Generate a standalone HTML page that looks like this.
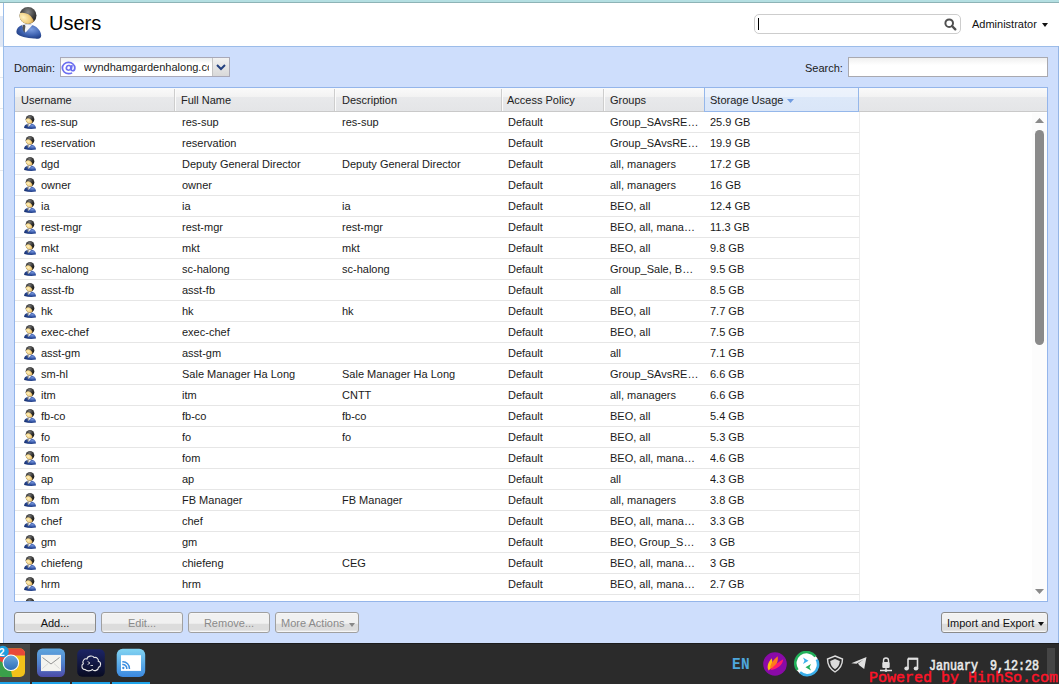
<!DOCTYPE html>
<html><head><meta charset="utf-8">
<style>
*{box-sizing:border-box;margin:0;padding:0}
html,body{width:1059px;height:684px;overflow:hidden;background:#fff;font-family:"Liberation Sans",sans-serif;font-size:11px;color:#1a1a1a}
.abs{position:absolute}
#topbar{left:0;top:0;width:1059px;height:2px;background:#b4dfe2}
#topline{left:0;top:2px;width:1059px;height:1px;background:#8db3b6}
#lstrip{left:0;top:3px;width:3px;height:640px;background:#fff}
#lband{left:0;top:16px;width:3px;height:31px;background:#dfe7f5}
#lline{left:3px;top:3px;width:1px;height:640px;background:#9bbde9}
#header{left:4px;top:3px;width:1055px;height:43px;background:#fff}
#hline{left:4px;top:46px;width:1055px;height:1px;background:#9cbce9}
#content{left:4px;top:47px;width:1054px;height:596px;background:#cedefc}
#rline{left:1058px;top:46px;width:1px;height:597px;background:#94b5e5}
#title{left:49px;top:11px;font-size:20px;color:#000;line-height:24px}
#bigicon{left:16px;top:7px}
#qsearch{left:754px;top:14px;width:207px;height:20px;border:1px solid #cdcdcd;border-radius:5px;background:#fff}
#caret{left:758px;top:18px;width:1px;height:12px;background:#000}
#admin{left:972px;top:17px;line-height:14px;color:#111}
#domlabel{left:14px;top:62px;line-height:13px}
#domsel{left:60px;top:57px;width:170px;height:20px;border:1px solid #a9a9b8;background:linear-gradient(#ebeeef,#fff 30%)}
#domtext{left:84px;top:60px;width:125px;overflow:hidden;white-space:nowrap;line-height:14px}
#at{left:61px;top:58px;font-size:15px;font-weight:bold;color:#6d73e6;line-height:17px}
#ddbtn{left:212px;top:58px;width:17px;height:18px;background:linear-gradient(#f2f2f2,#d8d8d8);border-left:1px solid #c4c4c4}
#srchlabel{left:805px;top:62px;line-height:13px}
#srch{left:848px;top:57px;width:200px;height:20px;border:1px solid #a9a9b0;background:linear-gradient(#f0f0f0,#fff 40%)}
#grid{left:14px;top:87px;width:1034px;height:515px;border:1px solid #94b5ea;background:#fff;overflow:hidden}
#ghead{position:absolute;left:0;top:0;width:1032px;height:24px;background:linear-gradient(#fafafa,#f2f2f2 40%,#e8e9eb 41%,#e4e5e7);border-bottom:1px solid #c9c9c9}
.h{position:absolute;top:1px;height:23px;line-height:23px;white-space:nowrap;color:#222}
.hs{position:absolute;top:1px;width:2px;height:22px;background:linear-gradient(90deg,#cdcdcd 50%,#fbfbfb 50%)}
#sorted{position:absolute;left:689px;top:0;width:155px;height:24px;background:linear-gradient(#edf3fc,#eaf1fc 40%,#dce8f9 41%,#dae6f8);border:1px solid #95b7ea;border-top:none}
#rows{position:absolute;left:0;top:24px;width:845px}
.r{position:relative;height:21px;border-bottom:1px solid #e6e6e6;border-right:1px solid #ededed;white-space:nowrap}
.c{position:absolute;top:0;height:20px;line-height:20px;overflow:hidden;text-overflow:ellipsis;white-space:nowrap;color:#1a1a1a}
.c1{left:26px;width:130px}
.ui{position:absolute;left:-17px;top:2px}
.c1{overflow:visible}
.c2{left:167px;width:150px}
.c3{left:327px;width:160px}
.c4{left:493px;width:95px}
.c5{left:595px;width:90px}
.c6{left:695px;width:140px}
#vsb{position:absolute;left:1017px;top:25px;width:15px;height:487px;background:#fcfcfc}
.btn{position:absolute;top:612px;height:21px;border:1px solid #8a8a8a;border-radius:3px;background:linear-gradient(#fdfdfd,#f1f1f1 1px,#f1f1f1 55%,#dcdcdc 56%,#dcdcdc 90%,#fff);text-align:center;line-height:20px;color:#111}
.dis{color:#8a8a8a;border-color:#a0a0a0}
#taskbar{left:0;top:643px;width:1059px;height:41px;background:#2b2b2b}
</style></head><body>
<svg width="0" height="0" style="position:absolute">
<defs>
<radialGradient id="gbody" cx="0.6" cy="0.35" r="0.7"><stop offset="0" stop-color="#7d9ee0"/><stop offset="0.6" stop-color="#3e62b0"/><stop offset="1" stop-color="#1e3a7e"/></radialGradient>
<radialGradient id="gface" cx="0.35" cy="0.4" r="0.6"><stop offset="0" stop-color="#fff2c0"/><stop offset="0.7" stop-color="#f0cc7a"/><stop offset="1" stop-color="#c99a4a"/></radialGradient>
<radialGradient id="gbody2" cx="0.7" cy="0.4" r="0.75"><stop offset="0" stop-color="#7190d8"/><stop offset="0.55" stop-color="#2f50a0"/><stop offset="1" stop-color="#142c6a"/></radialGradient><radialGradient id="ghair2" cx="0.45" cy="0.25" r="0.75"><stop offset="0" stop-color="#777"/><stop offset="0.5" stop-color="#333"/><stop offset="1" stop-color="#111"/></radialGradient>
<radialGradient id="ghair" cx="0.5" cy="0.3" r="0.7"><stop offset="0" stop-color="#8a8a8a"/><stop offset="0.6" stop-color="#3d3d3d"/><stop offset="1" stop-color="#1f1f1f"/></radialGradient>
<clipPath id="hclip"><circle cx="12" cy="8.5" r="8.5"/></clipPath>
<clipPath id="hclip2"><circle cx="6" cy="5.2" r="4.3"/></clipPath>
<symbol id="ubig" viewBox="0 0 26 32">
<path d="M0.8,26.5 C-0.5,23.5 1.5,19.5 6,18 C9.5,17 14,17 17.5,18.5 C21.5,20 25,24 25.2,28.5 C25.3,31.5 22,32 18,31.6 C11,31 3,29.5 0.8,26.5 Z" fill="url(#gbody)"/>
<path d="M5.8,17.9 C9,17.2 13,17.1 16.5,18 L9.6,25.5 Z" fill="#f6f6f6"/>
<path d="M6.6,18 L9,18 L9.4,19.5 L8.4,26.3 L6.8,22.5 Z" fill="#555"/>
<circle cx="12" cy="8.5" r="8.5" fill="url(#ghair)"/>
<g clip-path="url(#hclip)"><ellipse cx="9.2" cy="12.8" rx="9.2" ry="6.3" transform="rotate(30 9.2 12.8)" fill="url(#gface)"/></g>
</symbol>
<symbol id="usm" viewBox="0 0 12 15">
<path d="M0.2,14 C-0.2,11.5 2.2,9.4 6,9.4 C9.6,9.4 12.2,11.5 11.9,14.6 C8,15.1 4,15 0.2,14 Z" fill="url(#gbody2)"/>
<path d="M2.6,9.8 C4,9.3 6,9.2 7.6,9.5 L4.4,13 Z" fill="#f2f2f2"/>
<path d="M3.4,9.7 L4.5,9.7 L4.3,13.3 L3.3,11.8 Z" fill="#555"/>
<circle cx="6" cy="5.2" r="4.3" fill="url(#ghair2)"/>
<g clip-path="url(#hclip2)"><ellipse cx="4.9" cy="7.6" rx="3.7" ry="2.9" transform="rotate(35 4.9 7.6)" fill="url(#gface)"/></g>
</symbol>
</defs>
</svg>
<div class="abs" id="topbar"></div><div class="abs" id="topline"></div>
<div class="abs" id="lstrip"></div><div class="abs" id="lband"></div><div class="abs" id="lline"></div><div class="abs" style="left:0;top:77px;width:3px;height:1px;background:#e6e9ee"></div><div class="abs" style="left:0;top:108px;width:3px;height:1px;background:#e6e9ee"></div><div class="abs" style="left:0;top:139px;width:3px;height:1px;background:#dfe6f2"></div><div class="abs" style="left:0;top:170px;width:3px;height:1px;background:#e6e9ee"></div>
<div class="abs" id="header"></div><div class="abs" id="hline"></div>
<div class="abs" id="content"></div><div class="abs" id="rline"></div>
<svg class="abs" id="bigicon" width="26" height="32"><use href="#ubig"/></svg>
<div class="abs" id="title">Users</div>
<div class="abs" id="qsearch"></div><div class="abs" id="caret"></div>
<svg class="abs" style="left:944px;top:18px" width="13" height="13" viewBox="0 0 13 13"><circle cx="5.2" cy="5.2" r="3.8" fill="none" stroke="#505050" stroke-width="2"/><path d="M8,8 L11.3,11.3" stroke="#505050" stroke-width="2.4" stroke-linecap="round"/></svg>
<div class="abs" id="admin">Administrator</div>
<svg class="abs" style="left:1042px;top:23px" width="6" height="4"><path d="M0,0 H6 L3,4 Z" fill="#111"/></svg>
<div class="abs" id="domlabel">Domain:</div>
<div class="abs" id="domsel"></div>
<svg class="abs" style="left:61px;top:60px" width="16" height="16" viewBox="0 0 16 16" fill="none" stroke="#6c6ff0"><g transform="translate(7.6,8) scale(1.04,0.94) translate(-7.6,-8)"><path d="M11,13.2 C10,13.7 8.9,14 7.6,14 A6,6 0 1 1 13.6,7.9 C13.6,9.9 12.5,10.9 11.3,10.9 C10.3,10.9 9.9,10.3 10.1,9.3 L10.9,4.9" stroke-width="1.7"/><ellipse cx="7.6" cy="7.8" rx="2.1" ry="2.5" stroke-width="1.6" transform="rotate(15 7.6 7.8)"/></g></svg>
<div class="abs" id="domtext">wyndhamgardenhalong.com</div>
<div class="abs" id="ddbtn"></div>
<svg class="abs" style="left:216px;top:64px" width="10" height="7"><path d="M1,1 L5,5 L9,1" fill="none" stroke="#23407f" stroke-width="2"/></svg>
<div class="abs" id="srchlabel">Search:</div>
<div class="abs" id="srch"></div>
<div class="abs" id="grid">
 <div id="ghead">
  <div class="h" style="left:6px">Username</div>
  <div class="hs" style="left:159px"></div>
  <div class="h" style="left:166px">Full Name</div>
  <div class="hs" style="left:319px"></div>
  <div class="h" style="left:327px">Description</div>
  <div class="hs" style="left:486px"></div>
  <div class="h" style="left:492px">Access Policy</div>
  <div class="hs" style="left:588px"></div>
  <div class="h" style="left:595px">Groups</div>
  <div id="sorted"></div>
  <div class="h" style="left:695px">Storage Usage</div>
  <svg style="position:absolute;left:772px;top:11px" width="7" height="4"><path d="M0,0 H7 L3.5,4 Z" fill="#6f9be0"/></svg>
 </div>
 <div id="rows">
<div class="r"><div class="c c1"><svg class="ui" width="12" height="15"><use href="#usm"/></svg>res-sup</div><div class="c c2">res-sup</div><div class="c c3">res-sup</div><div class="c c4">Default</div><div class="c c5">Group_SAvsREPORT, all</div><div class="c c6">25.9 GB</div></div>
<div class="r"><div class="c c1"><svg class="ui" width="12" height="15"><use href="#usm"/></svg>reservation</div><div class="c c2">reservation</div><div class="c c3"></div><div class="c c4">Default</div><div class="c c5">Group_SAvsREPORT, all</div><div class="c c6">19.9 GB</div></div>
<div class="r"><div class="c c1"><svg class="ui" width="12" height="15"><use href="#usm"/></svg>dgd</div><div class="c c2">Deputy General Director</div><div class="c c3">Deputy General Director</div><div class="c c4">Default</div><div class="c c5">all, managers</div><div class="c c6">17.2 GB</div></div>
<div class="r"><div class="c c1"><svg class="ui" width="12" height="15"><use href="#usm"/></svg>owner</div><div class="c c2">owner</div><div class="c c3"></div><div class="c c4">Default</div><div class="c c5">all, managers</div><div class="c c6">16 GB</div></div>
<div class="r"><div class="c c1"><svg class="ui" width="12" height="15"><use href="#usm"/></svg>ia</div><div class="c c2">ia</div><div class="c c3">ia</div><div class="c c4">Default</div><div class="c c5">BEO, all</div><div class="c c6">12.4 GB</div></div>
<div class="r"><div class="c c1"><svg class="ui" width="12" height="15"><use href="#usm"/></svg>rest-mgr</div><div class="c c2">rest-mgr</div><div class="c c3">rest-mgr</div><div class="c c4">Default</div><div class="c c5">BEO, all, managers</div><div class="c c6">11.3 GB</div></div>
<div class="r"><div class="c c1"><svg class="ui" width="12" height="15"><use href="#usm"/></svg>mkt</div><div class="c c2">mkt</div><div class="c c3">mkt</div><div class="c c4">Default</div><div class="c c5">BEO, all</div><div class="c c6">9.8 GB</div></div>
<div class="r"><div class="c c1"><svg class="ui" width="12" height="15"><use href="#usm"/></svg>sc-halong</div><div class="c c2">sc-halong</div><div class="c c3">sc-halong</div><div class="c c4">Default</div><div class="c c5">Group_Sale, BEO, all</div><div class="c c6">9.5 GB</div></div>
<div class="r"><div class="c c1"><svg class="ui" width="12" height="15"><use href="#usm"/></svg>asst-fb</div><div class="c c2">asst-fb</div><div class="c c3"></div><div class="c c4">Default</div><div class="c c5">all</div><div class="c c6">8.5 GB</div></div>
<div class="r"><div class="c c1"><svg class="ui" width="12" height="15"><use href="#usm"/></svg>hk</div><div class="c c2">hk</div><div class="c c3">hk</div><div class="c c4">Default</div><div class="c c5">BEO, all</div><div class="c c6">7.7 GB</div></div>
<div class="r"><div class="c c1"><svg class="ui" width="12" height="15"><use href="#usm"/></svg>exec-chef</div><div class="c c2">exec-chef</div><div class="c c3"></div><div class="c c4">Default</div><div class="c c5">BEO, all</div><div class="c c6">7.5 GB</div></div>
<div class="r"><div class="c c1"><svg class="ui" width="12" height="15"><use href="#usm"/></svg>asst-gm</div><div class="c c2">asst-gm</div><div class="c c3"></div><div class="c c4">Default</div><div class="c c5">all</div><div class="c c6">7.1 GB</div></div>
<div class="r"><div class="c c1"><svg class="ui" width="12" height="15"><use href="#usm"/></svg>sm-hl</div><div class="c c2">Sale Manager Ha Long</div><div class="c c3">Sale Manager Ha Long</div><div class="c c4">Default</div><div class="c c5">Group_SAvsREPORT, all</div><div class="c c6">6.6 GB</div></div>
<div class="r"><div class="c c1"><svg class="ui" width="12" height="15"><use href="#usm"/></svg>itm</div><div class="c c2">itm</div><div class="c c3">CNTT</div><div class="c c4">Default</div><div class="c c5">all, managers</div><div class="c c6">6.6 GB</div></div>
<div class="r"><div class="c c1"><svg class="ui" width="12" height="15"><use href="#usm"/></svg>fb-co</div><div class="c c2">fb-co</div><div class="c c3">fb-co</div><div class="c c4">Default</div><div class="c c5">BEO, all</div><div class="c c6">5.4 GB</div></div>
<div class="r"><div class="c c1"><svg class="ui" width="12" height="15"><use href="#usm"/></svg>fo</div><div class="c c2">fo</div><div class="c c3">fo</div><div class="c c4">Default</div><div class="c c5">BEO, all</div><div class="c c6">5.3 GB</div></div>
<div class="r"><div class="c c1"><svg class="ui" width="12" height="15"><use href="#usm"/></svg>fom</div><div class="c c2">fom</div><div class="c c3"></div><div class="c c4">Default</div><div class="c c5">BEO, all, managers</div><div class="c c6">4.6 GB</div></div>
<div class="r"><div class="c c1"><svg class="ui" width="12" height="15"><use href="#usm"/></svg>ap</div><div class="c c2">ap</div><div class="c c3"></div><div class="c c4">Default</div><div class="c c5">all</div><div class="c c6">4.3 GB</div></div>
<div class="r"><div class="c c1"><svg class="ui" width="12" height="15"><use href="#usm"/></svg>fbm</div><div class="c c2">FB Manager</div><div class="c c3">FB Manager</div><div class="c c4">Default</div><div class="c c5">all, managers</div><div class="c c6">3.8 GB</div></div>
<div class="r"><div class="c c1"><svg class="ui" width="12" height="15"><use href="#usm"/></svg>chef</div><div class="c c2">chef</div><div class="c c3"></div><div class="c c4">Default</div><div class="c c5">BEO, all, managers</div><div class="c c6">3.3 GB</div></div>
<div class="r"><div class="c c1"><svg class="ui" width="12" height="15"><use href="#usm"/></svg>gm</div><div class="c c2">gm</div><div class="c c3"></div><div class="c c4">Default</div><div class="c c5">BEO, Group_Sale, all</div><div class="c c6">3 GB</div></div>
<div class="r"><div class="c c1"><svg class="ui" width="12" height="15"><use href="#usm"/></svg>chiefeng</div><div class="c c2">chiefeng</div><div class="c c3">CEG</div><div class="c c4">Default</div><div class="c c5">BEO, all, managers</div><div class="c c6">3 GB</div></div>
<div class="r"><div class="c c1"><svg class="ui" width="12" height="15"><use href="#usm"/></svg>hrm</div><div class="c c2">hrm</div><div class="c c3"></div><div class="c c4">Default</div><div class="c c5">BEO, all, managers</div><div class="c c6">2.7 GB</div></div>
<div class="r"><div class="c c1"><svg class="ui" width="12" height="15"><use href="#usm"/></svg>xyz</div><div class="c c2">xyz</div><div class="c c3"></div><div class="c c4">Default</div><div class="c c5">all</div><div class="c c6">2.5 GB</div></div>
 </div>
 <div id="vsb"></div>
 <svg style="position:absolute;left:1020px;top:30px" width="9" height="5"><path d="M0,5 L4.5,0 L9,5 Z" fill="#8a8a8a"/></svg>
 <div style="position:absolute;left:1020px;top:42px;width:9px;height:215px;border-radius:4.5px;background:#8a8a8a"></div>
 <svg style="position:absolute;left:1020px;top:501px" width="9" height="5"><path d="M0,0 L9,0 L4.5,5 Z" fill="#8a8a8a"/></svg>
</div>
<div class="btn" style="left:14px;width:82px">Add...</div>
<div class="btn dis" style="left:101px;width:82px">Edit...</div>
<div class="btn dis" style="left:188px;width:82px">Remove...</div>
<div class="btn dis" style="left:275px;width:84px;text-align:left;padding-left:5px">More Actions</div>
<svg class="abs" style="left:349px;top:623px" width="6" height="4"><path d="M0,0 H6 L3,4 Z" fill="#888"/></svg>
<div class="btn" style="left:941px;width:107px;text-align:left;padding-left:5px">Import and Export</div>
<svg class="abs" style="left:1038px;top:622px" width="6" height="4"><path d="M0,0 H6 L3,4 Z" fill="#111"/></svg>
<div class="abs" id="taskbar"></div>
<div class="abs" style="left:0;top:643px;width:1059px;height:1px;background:#1c1c1c"></div>
<div class="abs" style="left:0;top:644px;width:30px;height:38px;background:#464646"></div>
<div class="abs" style="left:0;top:682px;width:30px;height:2px;background:#1ea3e8"></div>
<div class="abs" style="left:32px;top:682px;width:38px;height:2px;background:#1ea3e8"></div>
<div class="abs" style="left:72px;top:682px;width:38px;height:2px;background:#1ea3e8"></div>
<div class="abs" style="left:112px;top:682px;width:38px;height:2px;background:#1ea3e8"></div>
<svg class="abs" style="left:0;top:644px" width="30" height="38" viewBox="0 644 30 38">
 <defs><clipPath id="chc"><rect x="-3" y="648.6" width="28" height="28.4" rx="5"/></clipPath></defs>
 <g clip-path="url(#chc)">
  <rect x="-4" y="647" width="30" height="32" fill="#f2c21a"/>
  <path d="M-4,647 H26 V655.5 H11 L2,663 L-4,660 Z" fill="#e8483a"/>
  <path d="M-4,660 L2,662 L10.9,670 L12.8,679 H-4 Z" fill="#3aa04a"/>
 </g>
 <circle cx="10.9" cy="662.8" r="8.3" fill="#fff"/>
 <defs><linearGradient id="gchb" x1="0" y1="0" x2="0" y2="1"><stop offset="0" stop-color="#6aa6dc"/><stop offset="1" stop-color="#2f6fb8"/></linearGradient></defs><circle cx="10.9" cy="662.8" r="7.2" fill="url(#gchb)"/>
 <circle cx="3" cy="651.5" r="5.8" fill="#1d9fe0"/>
 <text x="-1" y="656" font-family="Liberation Sans" font-size="10" font-weight="bold" fill="#fff">2</text>
</svg>
<svg class="abs" style="left:37px;top:648px" width="29" height="30" viewBox="0 0 29 30">
 <defs><linearGradient id="gmail" x1="0" y1="0" x2="0" y2="1"><stop offset="0" stop-color="#5fa6de"/><stop offset="0.55" stop-color="#4f7fcc"/><stop offset="1" stop-color="#4c4aa6"/></linearGradient></defs>
 <rect x="0" y="0.6" width="28" height="28.4" rx="5.5" fill="url(#gmail)"/>
 <rect x="4" y="6.9" width="20" height="16.2" fill="#f4f3ef"/>
 <path d="M5.5,9.5 L14,16 L22.5,9.5" fill="none" stroke="#888" stroke-width="0.9"/>
 <path d="M5.5,20.5 L11,15.5 M22.5,20.5 L17,15.5" fill="none" stroke="#ccc" stroke-width="0.7"/>
</svg>
<svg class="abs" style="left:77px;top:649px" width="28" height="28" viewBox="0 0 28 28">
 <defs><linearGradient id="gterm" x1="0" y1="0" x2="0" y2="1"><stop offset="0" stop-color="#1c2566"/><stop offset="1" stop-color="#080b22"/></linearGradient></defs>
 <rect x="0.2" y="0.2" width="27.6" height="27.6" rx="5" fill="url(#gterm)"/>
 <path d="M8,20.5 C4.5,20.5 4,16 6.3,14.8 C4.8,12 7.5,9 10,10 C10.5,6.8 15.5,6 17.2,8.6 C19.5,7.8 22,10 21.3,12.3 C24.5,13 24.2,17.5 21.5,18.3 C21.5,21.5 17,22.5 15.5,20.5 C13.5,22.3 10,22.3 8,20.5 Z" fill="none" stroke="#e8e8e8" stroke-width="1.1"/>
 <path d="M10.6,12.5 L13,14 L10.6,15.5" fill="none" stroke="#ddd" stroke-width="0.9"/>
 <path d="M13.5,16.5 H16" stroke="#ddd" stroke-width="0.9"/>
</svg>
<svg class="abs" style="left:116px;top:648px" width="30" height="30" viewBox="0 0 30 30">
 <defs><linearGradient id="grss" x1="0" y1="0" x2="0" y2="1"><stop offset="0" stop-color="#82d4f2"/><stop offset="1" stop-color="#3a88e0"/></linearGradient></defs>
 <rect x="0.7" y="0.8" width="28.5" height="28.2" rx="6" fill="url(#grss)"/>
 <rect x="5" y="7.2" width="20" height="15.7" fill="#fff"/>
 <g transform="translate(6.5,21) scale(0.82) translate(-6.5,-21)"><circle cx="7.5" cy="19.8" r="1.4" fill="#3e8fe0"/>
 <path d="M6.2,15.5 A5,5 0 0 1 11.8,21 M6.2,12.3 A8,8 0 0 1 15,21" fill="none" stroke="#3e8fe0" stroke-width="1.8"/></g>
</svg>
<div class="abs" style="left:732px;top:656px;transform:scaleY(1.15);transform-origin:0 0;font-family:'Liberation Mono',monospace;font-weight:bold;font-size:14.5px;line-height:15px;color:#4ea6dc;letter-spacing:0.3px">EN</div>
<svg class="abs" style="left:762px;top:651px" width="26" height="26" viewBox="0 0 26 26">
 <circle cx="13" cy="13" r="11.8" fill="#8a0aa8"/>
 <path d="M6.6,19.5 C4.2,15.5 6.5,11 9.6,7.2 C10.8,10.5 10.8,14.5 8.6,17.5 Z" fill="#ffc20e"/>
 <path d="M8.2,18 C8,12.8 11.5,9 15.6,5.3 C16.4,9.5 15.2,13.5 11.2,16.8 Z" fill="#ff7a1a"/>
 <path d="M8.3,19 C11.5,14.8 16.5,11 21.2,8.3 C20.8,13 17.5,16.6 12.2,18.2 C11,18.6 9.6,18.9 8.3,19 Z" fill="#ff1a6e"/>
</svg>
<svg class="abs" style="left:794px;top:651px" width="26" height="26" viewBox="0 0 26 26">
 <circle cx="13" cy="13" r="11.8" fill="#fff"/>
 <path d="M3.5,19 A10.7,10.7 0 0 1 21.5,5.5" fill="none" stroke="#22b05a" stroke-width="2.6"/>
 <path d="M22.8,8.5 A10.7,10.7 0 0 1 6,21.3" fill="none" stroke="#3aaeea" stroke-width="2.6"/>
 <path d="M9,6.5 L14.5,9.8 L9,13 L10.5,9.8 Z" fill="#3aaeea"/>
 <path d="M17,13 L11.5,16.3 L17,19.5 L15.5,16.3 Z" fill="#22b05a"/>
</svg>
<svg class="abs" style="left:826px;top:655px" width="18" height="18" viewBox="0 0 18 18">
 <path d="M9,1 L16.5,4 C16.5,10 14,14 9,17 C4,14 1.5,10 1.5,4 Z" fill="none" stroke="#dcdcdc" stroke-width="1.4"/>
 <path d="M9,4 L13.8,6 C13.5,10 12,12.5 9,14.3 C6,12.5 4.5,10 4.2,6 Z" fill="#dcdcdc"/>
</svg>
<svg class="abs" style="left:851px;top:656px" width="16" height="14" viewBox="0 0 16 14">
 <path d="M0.3,7.3 L15.5,1 L13.2,13 L8.5,9.6 L7,7.6 L12.5,3.5 L5.5,7.8 Z" fill="#e0e0e0"/>
</svg>
<svg class="abs" style="left:879px;top:656px" width="14" height="17" viewBox="0 0 14 17">
 <path d="M4.5,6 V4.5 A2.5,2.5 0 0 1 9.5,4.5 V6" fill="none" stroke="#e0e0e0" stroke-width="1.4"/>
 <rect x="3.3" y="6" width="7.4" height="6" rx="1" fill="#e0e0e0"/>
 <path d="M7,12 V14.2 M1,14.5 H13" stroke="#e0e0e0" stroke-width="1.3"/>
 <circle cx="7" cy="14.6" r="1.4" fill="#e0e0e0"/>
</svg>
<svg class="abs" style="left:904px;top:657px" width="15" height="14" viewBox="0 0 15 14">
 <path d="M4,1.5 H13.5 V11.5 M4,1.5 V11.5" fill="none" stroke="#e0e0e0" stroke-width="1.6"/>
 <rect x="4" y="0.8" width="9.5" height="2" fill="#e0e0e0"/>
 <ellipse cx="2.6" cy="11.5" rx="2.3" ry="1.9" fill="#e0e0e0"/>
 <ellipse cx="12" cy="11.5" rx="2.3" ry="1.9" fill="#e0e0e0"/>
</svg>
<div class="abs" style="left:929px;top:657px;font-family:'Liberation Mono',monospace;font-size:11.7px;line-height:16px;color:#eaeaea;white-space:pre;-webkit-text-stroke:0.5px #eaeaea;transform:scaleY(1.18);transform-origin:0 0">January</div>
<div class="abs" style="left:990px;top:657px;font-family:'Liberation Mono',monospace;font-size:11.7px;line-height:16px;color:#eaeaea;white-space:pre;-webkit-text-stroke:0.5px #eaeaea;transform:scaleY(1.18);transform-origin:0 0">9,12:28</div>
<div class="abs" style="left:1047px;top:648px;width:8px;height:32px;background:#454545"></div>
<div class="abs" style="left:869px;top:671px;font-family:'Liberation Mono',monospace;font-size:15px;line-height:15px;color:#ff1428;white-space:pre;-webkit-text-stroke:0.45px #ff1428">Powered by HinhSo.com</div>
</body></html>
